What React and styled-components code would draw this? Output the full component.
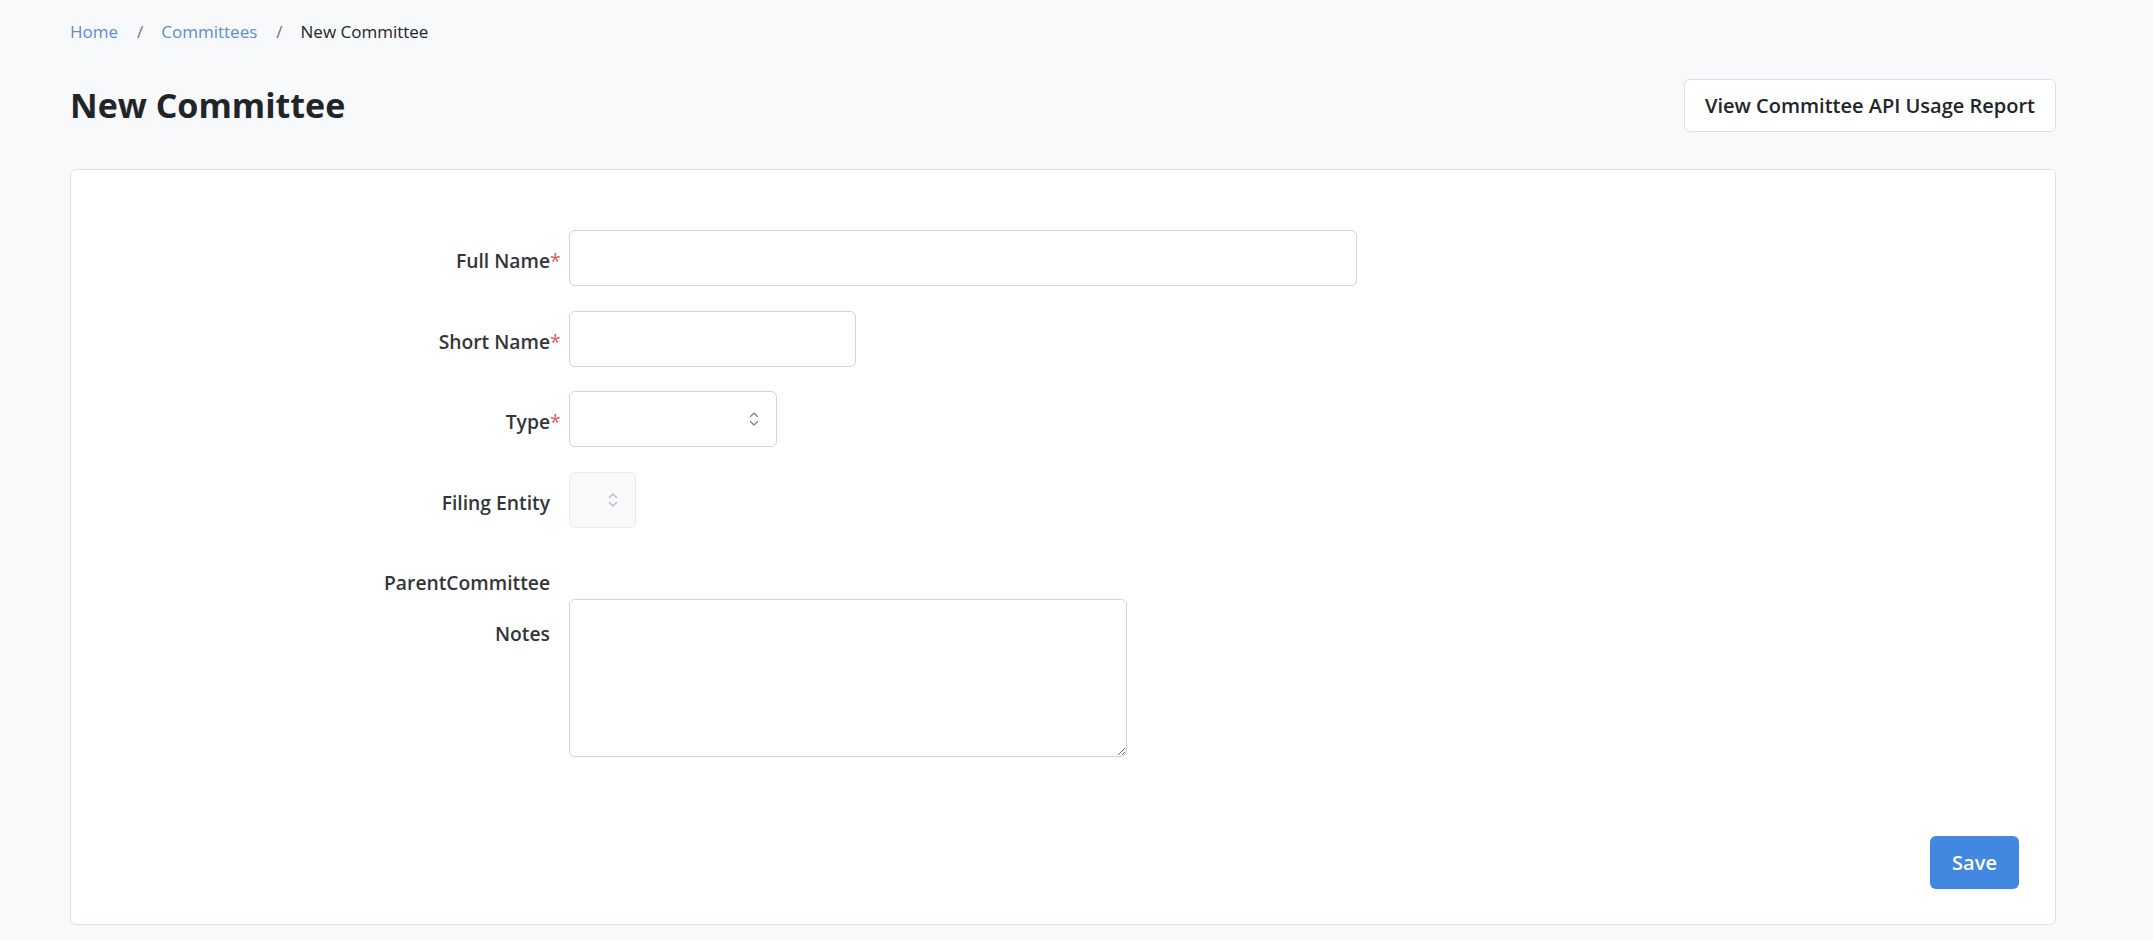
import React from "react";
import styled, { createGlobalStyle } from "styled-components";

const Global = createGlobalStyle`
  html, body { margin: 0; padding: 0; }
  body {
    background: #f8f9fa;
    font-family: "Open Sans", "Noto Sans", "Liberation Sans", sans-serif;
    color: #212529;
  }
  * { box-sizing: border-box; }
`;

const Page = styled.div`
  padding: 20px 97px 15px 70px;
  min-height: 940px;
`;

const Breadcrumb = styled.nav`
  display: flex;
  align-items: center;
  font-size: 17px;
  line-height: 24px;
  height: 24px;
`;

const CrumbLink = styled.a`
  color: #5b8dd3;
  text-decoration: none;
`;

const CrumbSep = styled.span`
  color: #6c757d;
  margin: 0 18px 0 19px;
`;

const CrumbCurrent = styled.span`
  color: #212529;
`;

const HeaderRow = styled.div`
  display: flex;
  align-items: center;
  justify-content: space-between;
  margin-top: 35px;
  height: 53px;
`;

const Title = styled.h1`
  margin: 0;
  font-size: 34px;
  font-weight: 700;
  line-height: 1.2;
  color: #212529;
`;

const OutlineButton = styled.button`
  height: 53px;
  padding: 0 20px;
  background: #ffffff;
  border: 1px solid #dcdfe4;
  border-radius: 6px;
  font-family: inherit;
  font-size: 20px;
  font-weight: 600;
  color: #212529;
  cursor: pointer;
`;

const Card = styled.section`
  margin-top: 37px;
  background: #ffffff;
  border: 1px solid #dee2e6;
  border-radius: 6px;
  padding: 60px 36px 35px 0;
  display: flex;
  flex-direction: column;
`;

const Form = styled.div`
  display: flex;
  flex-direction: column;
`;

const Row = styled.div`
  display: grid;
  grid-template-columns: 488px 1fr;
  column-gap: 10px;
  margin-bottom: ${(p) => p.$mb ?? 25}px;
  align-items: ${(p) => (p.$top ? "start" : "center")};
`;

const Label = styled.label`
  justify-self: end;
  font-size: 19.3px;
  font-weight: 600;
  color: #333639;
  line-height: 26px;
  padding-top: ${(p) => p.$pt ?? 5}px;
  padding-bottom: ${(p) => p.$pb ?? 0}px;
  white-space: nowrap;
`;

const Star = styled.span`
  color: #e05a5a;
  visibility: ${(p) => (p.$show ? "visible" : "hidden")};
  font-weight: 400;
  display: inline-block;
  width: 9px;
`;

const TextInput = styled.input`
  width: ${(p) => p.$w}px;
  height: 56px;
  border: 1px solid #ced4da;
  border-radius: 6px;
  padding: 0 16px;
  font-family: inherit;
  font-size: 20px;
  background: #fff;
  outline: none;
`;

const SelectWrap = styled.div`
  position: relative;
  width: ${(p) => p.$w}px;
  height: 56px;
`;

const Select = styled.select`
  appearance: none;
  -webkit-appearance: none;
  width: 100%;
  height: 100%;
  border: 1px solid ${(p) => (p.disabled ? "#dfe2e6" : "#ced4da")};
  border-radius: 6px;
  background: ${(p) => (p.disabled ? "#f6f7f9" : "#fff")};
  font-family: inherit;
  font-size: 20px;
  padding: 0 16px;
  outline: none;
`;

const Chevron = styled.svg`
  position: absolute;
  right: ${(p) => p.$right}px;
  top: 50%;
  transform: translateY(-50%);
  pointer-events: none;
`;

const TextArea = styled.textarea`
  width: 558px;
  height: 158px;
  border: 1px solid #ced4da;
  border-radius: 6px;
  padding: 12px 16px;
  font-family: inherit;
  font-size: 20px;
  resize: vertical;
  outline: none;
  display: block;
`;

const Footer = styled.div`
  display: flex;
  justify-content: flex-end;
  margin-top: 79px;
`;

const PrimaryButton = styled.button`
  width: 89px;
  height: 53px;
  background: #4388e0;
  color: #ffffff;
  border: none;
  border-radius: 6px;
  font-family: inherit;
  font-size: 20px;
  font-weight: 600;
  cursor: pointer;
`;

function UpDown({ right, color }) {
  return (
    <Chevron $right={right} width="12" height="20" viewBox="0 0 12 20" fill="none">
      <path d="M2.5 7.5 L6 4 L9.5 7.5" stroke={color} strokeWidth="1.3" strokeLinecap="round" strokeLinejoin="round" />
      <path d="M2.5 12.5 L6 16 L9.5 12.5" stroke={color} strokeWidth="1.3" strokeLinecap="round" strokeLinejoin="round" />
    </Chevron>
  );
}

export default function App() {
  return (
    <>
      <Global />
      <Page>
        <Breadcrumb>
          <CrumbLink href="#">Home</CrumbLink>
          <CrumbSep>/</CrumbSep>
          <CrumbLink href="#">Committees</CrumbLink>
          <CrumbSep>/</CrumbSep>
          <CrumbCurrent>New Committee</CrumbCurrent>
        </Breadcrumb>
        <HeaderRow>
          <Title>New Committee</Title>
          <OutlineButton>View Committee API Usage Report</OutlineButton>
        </HeaderRow>
        <Card>
          <Form>
            <Row>
              <Label>Full Name<Star $show>*</Star></Label>
              <TextInput $w={788} />
            </Row>
            <Row $mb={24}>
              <Label>Short Name<Star $show>*</Star></Label>
              <TextInput $w={287} />
            </Row>
            <Row>
              <Label>Type<Star $show>*</Star></Label>
              <SelectWrap $w={208}>
                <Select defaultValue="">
                  <option value=""></option>
                  <option>Committee</option>
                  <option>Subcommittee</option>
                </Select>
                <UpDown right={17} color="#7d8287" />
              </SelectWrap>
            </Row>
            <Row>
              <Label>Filing Entity<Star>*</Star></Label>
              <SelectWrap $w={67}>
                <Select disabled defaultValue="">
                  <option value=""></option>
                </Select>
                <UpDown right={17} color="#b3b7bc" />
              </SelectWrap>
            </Row>
            <Row $mb={0} $top>
              <Label $pt={17} $pb={3}>ParentCommittee<Star>*</Star></Label>
              <div />
            </Row>
            <Row $mb={0} $top>
              <Label $pt={22}>Notes<Star>*</Star></Label>
              <TextArea />
            </Row>
          </Form>
          <Footer>
            <PrimaryButton>Save</PrimaryButton>
          </Footer>
        </Card>
      </Page>
    </>
  );
}
